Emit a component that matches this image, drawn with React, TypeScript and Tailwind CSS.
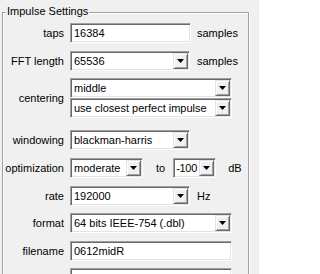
import React from "react";

const font = "font-['Liberation_Sans',Arial,sans-serif]";

function Arrow() {
  return (
    <div className="flex h-full w-[15px] shrink-0 items-center justify-center border border-t-[#e3e3e3] border-l-[#e3e3e3] border-b-[#696969] border-r-[#696969] bg-[#f0f0f0] shadow-[inset_1px_1px_0_#fff,inset_-1px_-1px_0_#a0a0a0]">
      <svg width="7" height="4" viewBox="0 0 7 4">
        <path d="M0 0h7L3.5 4z" fill="#000" />
      </svg>
    </div>
  );
}

function Field({ w, value, combo, tight }: { w: string; value?: string; combo?: boolean; tight?: boolean }) {
  return (
    <div
      className={`flex h-[20px] shrink-0 items-stretch border border-t-[#a0a0a0] border-l-[#a0a0a0] border-b-white border-r-white bg-white p-[1px] shadow-[inset_1px_1px_0_#696969,inset_-1px_-1px_0_#e3e3e3] ${w}`}
    >
      <div
        className={`flex min-w-0 flex-1 items-center overflow-hidden whitespace-nowrap text-[11px] text-black ${tight ? "pl-[1px] tracking-[-0.3px]" : "pl-[2px]"}`}
      >
        {value}
      </div>
      {combo && <Arrow />}
    </div>
  );
}

function Row({ label, mt, children }: { label: string; mt: string; children: React.ReactNode }) {
  return (
    <div className={`flex items-center ${mt}`}>
      <div className="w-[61px] shrink-0 text-right text-[11px] text-black">{label}</div>
      <div className="ml-[6px] flex items-center">{children}</div>
    </div>
  );
}

export default function App() {
  return (
    <div className={`h-[274px] w-[259px] overflow-hidden bg-[#f0f0f0] ${font}`}>
      <div className="pt-[12px] pl-[2px]">
        <div className="relative h-[300px] w-[247px] border border-[#a0a0a0] shadow-[inset_1px_1px_0_#fff,1px_1px_0_#fff]">
          <span className="absolute left-[3px] top-[-8px] bg-[#f0f0f0] px-[1px] text-[11px] leading-[13px] text-black">
            Impulse Settings
          </span>

          <Row label="taps" mt="mt-[10px]">
            <Field w="w-[121px]" value="16384" />
            <span className="ml-[6px] text-[11px]">samples</span>
          </Row>

          <Row label="FFT length" mt="mt-[8px]">
            <Field w="w-[120px]" value="65536" combo />
            <span className="ml-[7px] text-[11px]">samples</span>
          </Row>

          <div className="mt-[7px] flex items-center">
            <div className="w-[61px] shrink-0 text-right text-[11px] text-black">centering</div>
            <div className="ml-[6px] flex flex-col">
              <Field w="w-[162px]" value="middle" combo />
              <Field w="w-[162px]" value="use closest perfect impulse" combo />
            </div>
          </div>

          <Row label="windowing" mt="mt-[12px]">
            <Field w="w-[120px]" value="blackman-harris" combo />
          </Row>

          <Row label="optimization" mt="mt-[8px]">
            <Field w="w-[73px]" value="moderate" combo />
            <span className="ml-[13px] text-[11px]">to</span>
            <Field w="w-[43px] ml-[8px]" value="-100" combo tight />
            <span className="ml-[12px] text-[11px]">dB</span>
          </Row>

          <Row label="rate" mt="mt-[8px]">
            <Field w="w-[120px]" value="192000" combo />
            <span className="ml-[7px] text-[11px]">Hz</span>
          </Row>

          <Row label="format" mt="mt-[7px]">
            <Field w="w-[162px]" value="64 bits IEEE-754 (.dbl)" combo />
          </Row>

          <Row label="filename" mt="mt-[8px]">
            <Field w="w-[162px]" value="0612midR" />
          </Row>

          <Row label="" mt="mt-[7px]">
            <Field w="w-[162px]" value="" />
          </Row>
        </div>
      </div>
    </div>
  );
}
